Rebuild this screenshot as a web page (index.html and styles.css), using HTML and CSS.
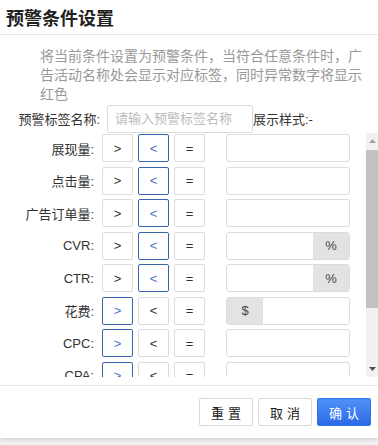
FILE: index.html
```html
<!DOCTYPE html>
<html>
<head>
<meta charset="utf-8">
<link rel="stylesheet" href="styles.css">
</head>
<body>
<div class="dialog">
  <div class="header"><span class="title">预警条件设置</span></div>
  <div class="desc">将当前条件设置为预警条件，当符合任意条件时，广告活动名称处会显示对应标签，同时异常数字将显示红色</div>
  <div class="name-row">
    <span class="name-label">预警标签名称:</span>
    <input class="name-input" type="text" placeholder="请输入预警标签名称">
    <span class="preview">展示样式:-</span>
  </div>
  <div class="scroll-wrap">
    <div class="scroll">
      <div class="row"><span class="label">展现量:</span><span class="op">&gt;</span><span class="op on">&lt;</span><span class="op">=</span><div class="val"></div></div>
      <div class="row"><span class="label">点击量:</span><span class="op">&gt;</span><span class="op on">&lt;</span><span class="op">=</span><div class="val"></div></div>
      <div class="row"><span class="label">广告订单量:</span><span class="op">&gt;</span><span class="op on">&lt;</span><span class="op">=</span><div class="val"></div></div>
      <div class="row"><span class="label">CVR:</span><span class="op">&gt;</span><span class="op on">&lt;</span><span class="op">=</span><div class="val"><span class="fill"></span><span class="addon">%</span></div></div>
      <div class="row"><span class="label">CTR:</span><span class="op">&gt;</span><span class="op on">&lt;</span><span class="op">=</span><div class="val"><span class="fill"></span><span class="addon">%</span></div></div>
      <div class="row"><span class="label">花费:</span><span class="op on">&gt;</span><span class="op">&lt;</span><span class="op">=</span><div class="val"><span class="addon left">$</span><span class="fill"></span></div></div>
      <div class="row"><span class="label">CPC:</span><span class="op on">&gt;</span><span class="op">&lt;</span><span class="op">=</span><div class="val"></div></div>
      <div class="row"><span class="label">CPA:</span><span class="op on">&gt;</span><span class="op">&lt;</span><span class="op">=</span><div class="val"></div></div>
      <div class="row"><span class="label">ACOS:</span><span class="op on">&gt;</span><span class="op">&lt;</span><span class="op">=</span><div class="val"><span class="fill"></span><span class="addon">%</span></div></div>
      <div class="row"><span class="label">ROAS:</span><span class="op">&gt;</span><span class="op on">&lt;</span><span class="op">=</span><div class="val"></div></div>
    </div>
    <div class="sbar">
      <div class="sbtn"><svg width="7" height="4" viewBox="0 0 7 4"><polygon points="0,4 7,4 3.5,0" fill="#a3a3a3"/></svg></div>
      <div class="strack"><div class="sthumb"></div></div>
      <div class="sbtn"><svg width="7" height="4" viewBox="0 0 7 4"><polygon points="0,0 7,0 3.5,4" fill="#505050"/></svg></div>
    </div>
  </div>
  <div class="footer">
    <button class="btn">重置</button>
    <button class="btn">取消</button>
    <button class="btn primary">确认</button>
  </div>
</div>
</body>
</html>
```
FILE: styles.css
```css
html, body {
  margin: 0;
  padding: 0;
  background: #f2f2f2;
}
body {
  font-family: "Liberation Sans", "Noto Sans CJK SC", sans-serif;
  color: #333;
  width: 378px;
  height: 445px;
  overflow: hidden;
}
.dialog {
  width: 378px;
  height: 438px;
  background: #fff;
  box-shadow: 0 1px 5px rgba(0, 0, 0, 0.18);
  display: flex;
  flex-direction: column;
}
.header {
  height: 35px;
  border-bottom: 1px solid #e6e6e6;
  padding-left: 6px;
  display: flex;
  align-items: center;
  box-sizing: border-box;
}
.title {
  font-size: 18px;
  font-weight: bold;
  color: #222;
  margin-top: -1px;
}
.desc {
  padding: 12px 10px 0 40px;
  font-size: 14px;
  line-height: 19px;
  color: #999;
  height: 57px;
}
.name-row {
  display: flex;
  align-items: center;
  height: 28px;
  margin-top: 0.5px;
}
.name-label {
  width: 100px;
  text-align: right;
  font-size: 13px;
  color: #333;
}
.name-input {
  margin: 0 0 0 7px;
  width: 146px;
  height: 28px;
  box-sizing: border-box;
  border: 1px solid #dcdcdc;
  border-radius: 3px;
  padding: 0 0 0 7px;
  font-family: inherit;
  font-size: 13px;
  outline: none;
}
.name-input::placeholder {
  color: #bbb;
}
.preview {
  font-size: 13px;
  color: #333;
}
.scroll-wrap {
  display: flex;
  height: 244px;
  margin-top: 0.5px;
}
.scroll {
  flex: 1;
  padding-top: 1px;
  overflow: hidden;
}
.sbar {
  width: 12px;
  display: flex;
  flex-direction: column;
  background: #f1f1f1;
}
.sbtn {
  height: 16px;
  display: flex;
  align-items: center;
  justify-content: center;
}
.strack {
  flex: 1;
}
.sthumb {
  height: 158px;
  margin-top: 1px;
  background: #c1c1c1;
}
.row {
  display: flex;
  align-items: center;
  height: 28px;
  margin-bottom: 4.5px;
}
.label {
  width: 94px;
  text-align: right;
  font-size: 13px;
  color: #333;
  margin-right: 8px;
  white-space: nowrap;
}
.op {
  width: 31px;
  height: 28px;
  box-sizing: border-box;
  border: 1px solid #dcdcdc;
  border-radius: 2px;
  display: flex;
  align-items: center;
  justify-content: center;
  font-size: 13px;
  color: #333;
  margin-right: 5px;
}
.op.on {
  border-color: #3a63ad;
  color: #4a72c6;
}
.val {
  margin-left: 16px;
  width: 124px;
  height: 28px;
  box-sizing: border-box;
  border: 1px solid #dcdcdc;
  border-radius: 3px;
  display: flex;
  overflow: hidden;
}
.fill {
  flex: 1;
}
.addon {
  width: 36px;
  background: #e4e3e3;
  display: flex;
  align-items: center;
  justify-content: center;
  font-size: 13px;
  color: #444;
}
.footer {
  margin-top: 8px;
  border-top: 1px solid #e6e6e6;
  display: flex;
  justify-content: flex-end;
  gap: 5px;
  padding: 12px 7px 0 0;
}
.btn {
  width: 54px;
  height: 28px;
  box-sizing: border-box;
  border: 1px solid #d9d9d9;
  border-radius: 2px;
  background: #fff;
  font-family: inherit;
  font-size: 13px;
  color: #222;
  letter-spacing: 4px;
  text-indent: 4px;
  padding: 0;
}
.btn.primary {
  background: linear-gradient(#4f92f8, #2c69e6);
  border-color: #3573e9;
  color: #fff;
}
```
